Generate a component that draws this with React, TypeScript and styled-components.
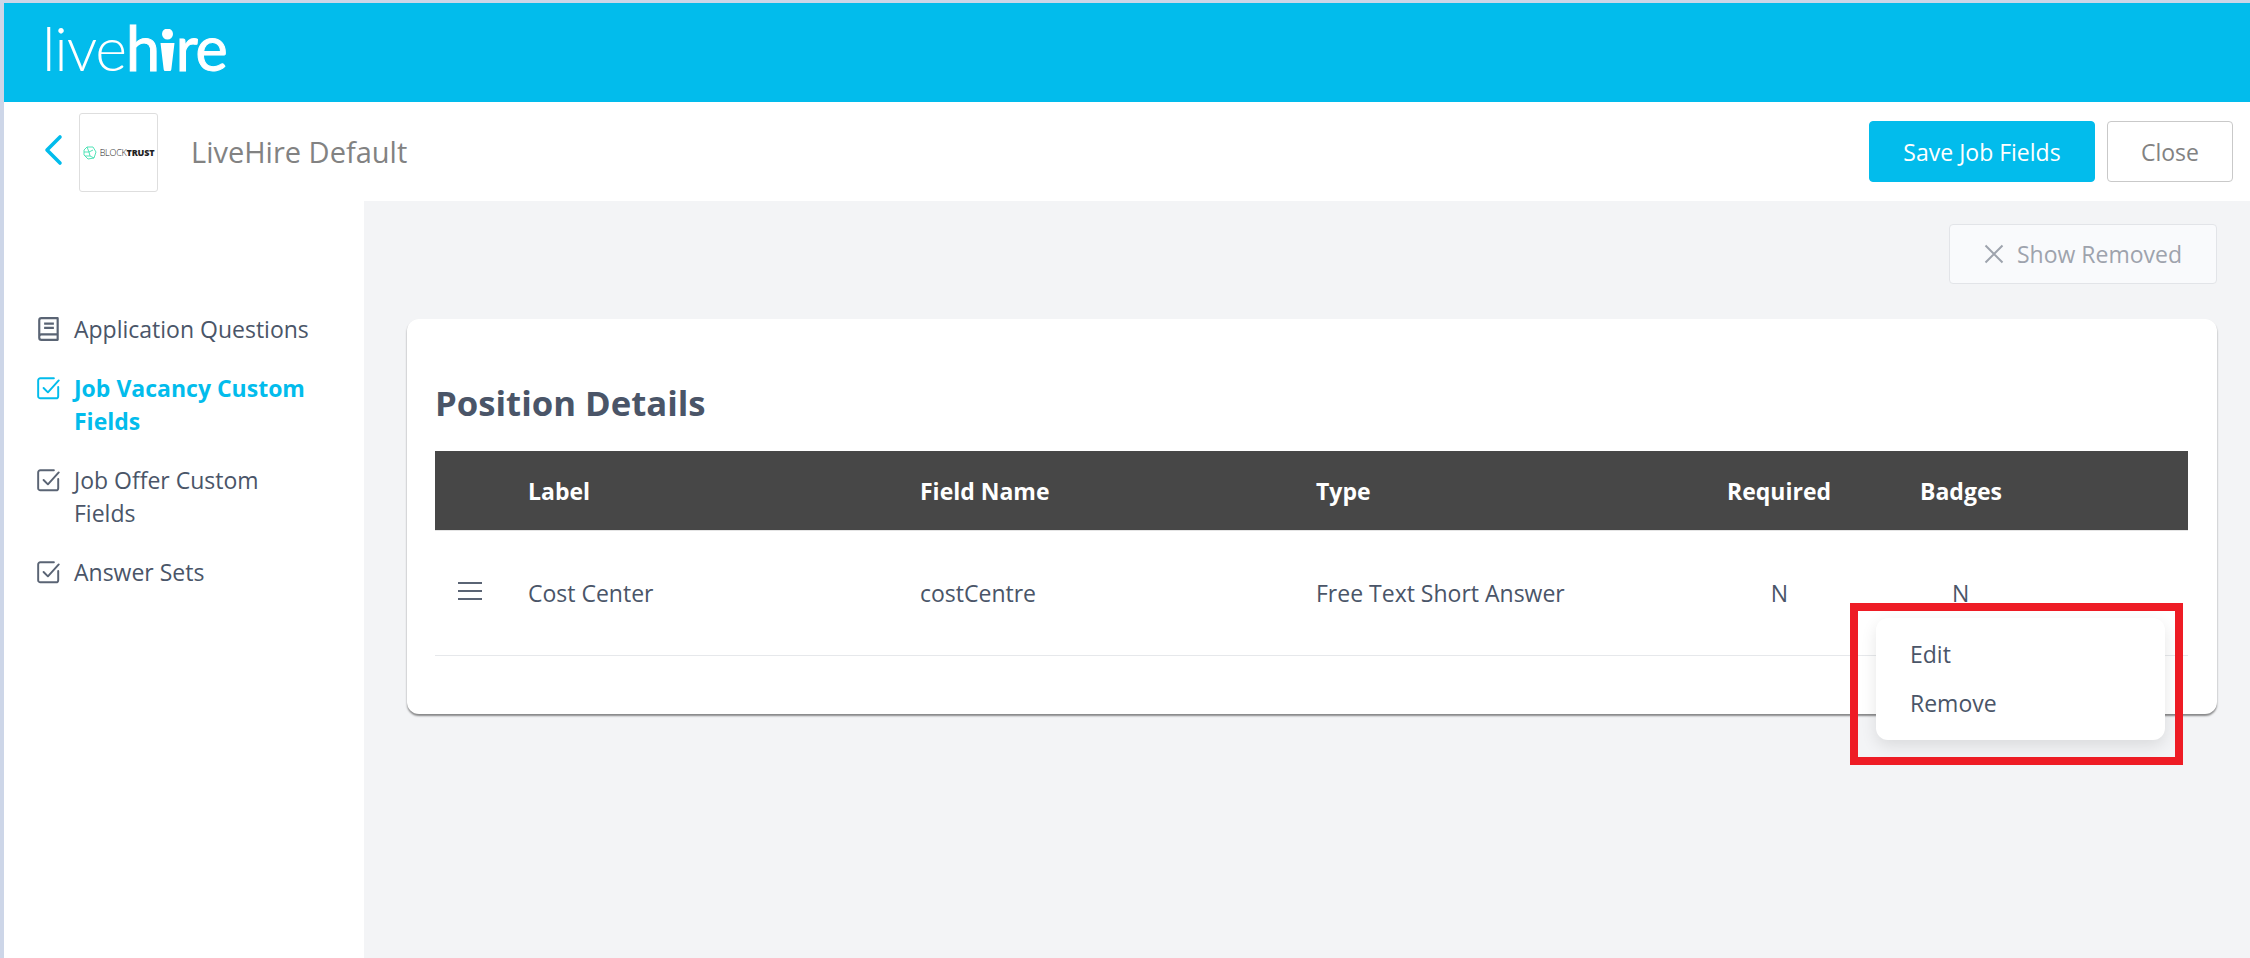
import styled, { createGlobalStyle } from "styled-components";

const GlobalStyle = createGlobalStyle`
  html, body {
    margin: 0;
    padding: 0;
    height: 100%;
  }
  body {
    background: #cdd6e8;
    font-family: "Open Sans", "Noto Sans", sans-serif;
    color: #4a5568;
  }
  #root {
    height: 100%;
  }
`;

const Page = styled.div`
  box-sizing: border-box;
  width: 2250px;
  height: 958px;
  padding: 3px 0 0 4px;
  display: flex;
  flex-direction: column;
  overflow: hidden;
`;

const TopBar = styled.header`
  height: 99px;
  flex: none;
  background: #02bcec;
  display: flex;
  align-items: center;
  padding-left: 38px;
`;

const Logo = styled.div`
  display: flex;
  align-items: baseline;
  color: #fff;
  font-family: Lato, sans-serif;
  font-size: 61px;
  line-height: 1;
  letter-spacing: -1.2px;
  margin-top: -10px;
`;

const LogoThin = styled.span`
  font-weight: 300;
`;

const LogoBold = styled.span`
  font-weight: 400;
  -webkit-text-stroke: 1px #fff;
`;

const LogoPerson = styled.svg`
  width: 15px;
  height: 42px;
  margin: 0 1px;
  align-self: flex-end;
  margin-bottom: 7px;
`;

const SubBar = styled.div`
  height: 99px;
  flex: none;
  background: #fff;
  display: flex;
  align-items: center;
  padding: 0 17px 0 40px;
`;

const BackIcon = styled.svg`
  width: 20px;
  height: 32px;
  margin-right: 15px;
  margin-top: -3px;
`;

const OrgLogo = styled.div`
  box-sizing: border-box;
  width: 79px;
  height: 79px;
  border: 1px solid #dedede;
  border-radius: 3px;
  display: flex;
  align-items: center;
  justify-content: center;
  gap: 3px;
  margin-top: 2px;
`;

const OrgName = styled.span`
  font-size: 9px;
  font-weight: 300;
  color: #222;
  letter-spacing: -0.2px;
  b {
    font-weight: 800;
  }
`;

const PageTitle = styled.h1`
  margin: 0 0 0 33px;
  font-size: 29px;
  font-weight: 400;
  color: #828282;
  flex: 1;
`;

const Button = styled.button<{ $primary?: boolean }>`
  box-sizing: border-box;
  height: 61px;
  border-radius: 4px;
  font-family: inherit;
  font-size: 23px;
  border: 1px solid ${(p) => (p.$primary ? "#02bcec" : "#c9c9c9")};
  background: ${(p) => (p.$primary ? "#02bcec" : "#fff")};
  color: ${(p) => (p.$primary ? "#fff" : "#828282")};
  width: ${(p) => (p.$primary ? "226px" : "126px")};
  margin-left: 12px;
  padding: 0;
`;

const Body = styled.div`
  flex: 1;
  display: flex;
  min-height: 0;
`;

const Sidebar = styled.nav`
  width: 360px;
  flex: none;
  background: #fff;
  box-sizing: border-box;
  padding: 112px 48px 0 32px;
  display: flex;
  flex-direction: column;
  gap: 26px;
`;

const NavItem = styled.div<{ $active?: boolean }>`
  display: flex;
  gap: 12px;
  font-size: 23px;
  line-height: 33px;
  font-weight: ${(p) => (p.$active ? 700 : 400)};
  color: ${(p) => (p.$active ? "#02bcec" : "#4a5568")};
`;

const NavIcon = styled.svg`
  width: 26px;
  height: 26px;
  flex: none;
  margin-top: 3px;
`;

const Main = styled.main`
  flex: 1;
  background: #f3f4f6;
  padding: 23px 33px 0 43px;
  display: flex;
  flex-direction: column;
`;

const RemovedButton = styled.button`
  align-self: flex-end;
  box-sizing: border-box;
  width: 268px;
  height: 60px;
  border: 1px solid #e2e4e8;
  border-radius: 4px;
  background: #f9fafc;
  color: #9ea3ad;
  font-family: inherit;
  font-size: 23px;
  display: flex;
  align-items: center;
  justify-content: center;
  gap: 13px;
  padding: 0;
`;

const RemovedIcon = styled.svg`
  width: 20px;
  height: 20px;
`;

const Card = styled.section`
  position: relative;
  margin-top: 35px;
  height: 395px;
  box-sizing: border-box;
  background: #fff;
  border-radius: 12px;
  padding: 60px 29px 0 28px;
  box-shadow: 0 2px 2px rgba(0, 0, 0, 0.45);
`;

const CardTitle = styled.h2`
  margin: 0 0 24px;
  font-size: 34.7px;
  line-height: 48px;
  font-weight: 700;
  color: #4a5568;
`;

const Table = styled.div`
  font-size: 23px;
`;

const Row = styled.div`
  display: grid;
  grid-template-columns: 93px 392px 396px 411px 105px 1fr;
  align-items: center;
`;

const HeadRow = styled(Row)`
  height: 79px;
  background: #474747;
  color: #fff;
  font-weight: 700;
  border-bottom: 1px solid #e4e4e4;
`;

const BodyRow = styled(Row)`
  height: 124px;
  border-bottom: 1px solid #e6e8eb;
`;

const CenterCell = styled.span`
  text-align: center;
`;

const BadgeCell = styled.span`
  padding-left: 120px;
`;

const BadgeHead = styled.span`
  padding-left: 88px;
`;

const DragIcon = styled.svg`
  width: 24px;
  height: 18px;
  margin-left: 23px;
  margin-top: -4px;
`;

const Annotation = styled.div`
  position: absolute;
  left: 1443px;
  top: 284px;
  box-sizing: border-box;
  width: 333px;
  height: 162px;
  border: 8px solid #ee1c25;
  padding: 7px 10px 17px 18px;
`;

const Menu = styled.div`
  height: 100%;
  background: #fff;
  border-radius: 12px;
  box-shadow: 0 6px 16px rgba(0, 0, 0, 0.1);
  box-sizing: border-box;
  padding: 12px 0 0 34px;
  font-size: 23px;
  line-height: 49px;
`;

const CheckIcon = ({ color }: { color: string }) => (
  <NavIcon viewBox="0 0 24 24" fill="none" stroke={color} strokeWidth="1.8" strokeLinecap="round" strokeLinejoin="round">
    <path d="M20.5 11v8.5a2 2 0 0 1-2 2H4a2 2 0 0 1-2-2V5a2 2 0 0 1 2-2h12.5" />
    <path d="M7 12l4 4 10-11" />
  </NavIcon>
);

const BookIcon = () => (
  <NavIcon viewBox="0 0 24 24" fill="none" stroke="#5a6474" strokeWidth="2" strokeLinejoin="round">
    <path d="M3 19V4a2 2 0 0 1 2-2h15v20H5a2 2 0 0 1-2-2v-1a2 2 0 0 1 2-2h15" />
    <path d="M7.5 7h9M7.5 11h9" />
  </NavIcon>
);

const App = () => {
  return (
    <Page>
      <GlobalStyle />
      <TopBar>
        <Logo>
          <LogoThin>live</LogoThin>
          <LogoBold>h</LogoBold>
          <LogoPerson viewBox="0 0 15 42" fill="#fff">
            <circle cx="7.5" cy="5" r="5.5" />
            <path d="M0.5 14h14l-3 25a4 4 0 0 1-8 0z" />
          </LogoPerson>
          <LogoBold>re</LogoBold>
        </Logo>
      </TopBar>
      <SubBar>
        <BackIcon viewBox="0 0 20 32" fill="none" stroke="#02bcec" strokeWidth="3.6" strokeLinecap="round" strokeLinejoin="round">
          <path d="M16 3L3 16l13 13" />
        </BackIcon>
        <OrgLogo>
          <svg width="14" height="14" viewBox="0 0 14 14" fill="none" stroke="#3fe0b0" strokeWidth="0.9">
            <path d="M4 1l6 0 3 5-2 6-6 1-4-4 0-5zM4 1l2 5-5 0M6 6l4-2M6 6l1 4 4 2M7 10l-5 0" />
          </svg>
          <OrgName>
            BLOCK<b>TRUST</b>
          </OrgName>
        </OrgLogo>
        <PageTitle>LiveHire Default</PageTitle>
        <Button $primary>Save Job Fields</Button>
        <Button>Close</Button>
      </SubBar>
      <Body>
        <Sidebar>
          <NavItem>
            <BookIcon />
            Application Questions
          </NavItem>
          <NavItem $active>
            <CheckIcon color="#02bcec" />
            Job Vacancy Custom Fields
          </NavItem>
          <NavItem>
            <CheckIcon color="#5a6474" />
            Job Offer Custom Fields
          </NavItem>
          <NavItem>
            <CheckIcon color="#5a6474" />
            Answer Sets
          </NavItem>
        </Sidebar>
        <Main>
          <RemovedButton>
            <RemovedIcon viewBox="0 0 20 20" fill="none" stroke="#9ea3ad" strokeWidth="2">
              <path d="M1.5 1.5l17 17M18.5 1.5l-17 17" />
            </RemovedIcon>
            Show Removed
          </RemovedButton>
          <Card>
            <CardTitle>Position Details</CardTitle>
            <Table>
              <HeadRow>
                <span />
                <span>Label</span>
                <span>Field Name</span>
                <span>Type</span>
                <span>Required</span>
                <BadgeHead>Badges</BadgeHead>
              </HeadRow>
              <BodyRow>
                <DragIcon viewBox="0 0 24 18" fill="none" stroke="#5a6474" strokeWidth="2.2">
                  <path d="M0 1h24M0 9h24M0 17h24" />
                </DragIcon>
                <span>Cost Center</span>
                <span>costCentre</span>
                <span>Free Text Short Answer</span>
                <CenterCell>N</CenterCell>
                <BadgeCell>N</BadgeCell>
              </BodyRow>
            </Table>
            <Annotation>
              <Menu>
                <div>Edit</div>
                <div>Remove</div>
              </Menu>
            </Annotation>
          </Card>
        </Main>
      </Body>
    </Page>
  );
};

export default App;
